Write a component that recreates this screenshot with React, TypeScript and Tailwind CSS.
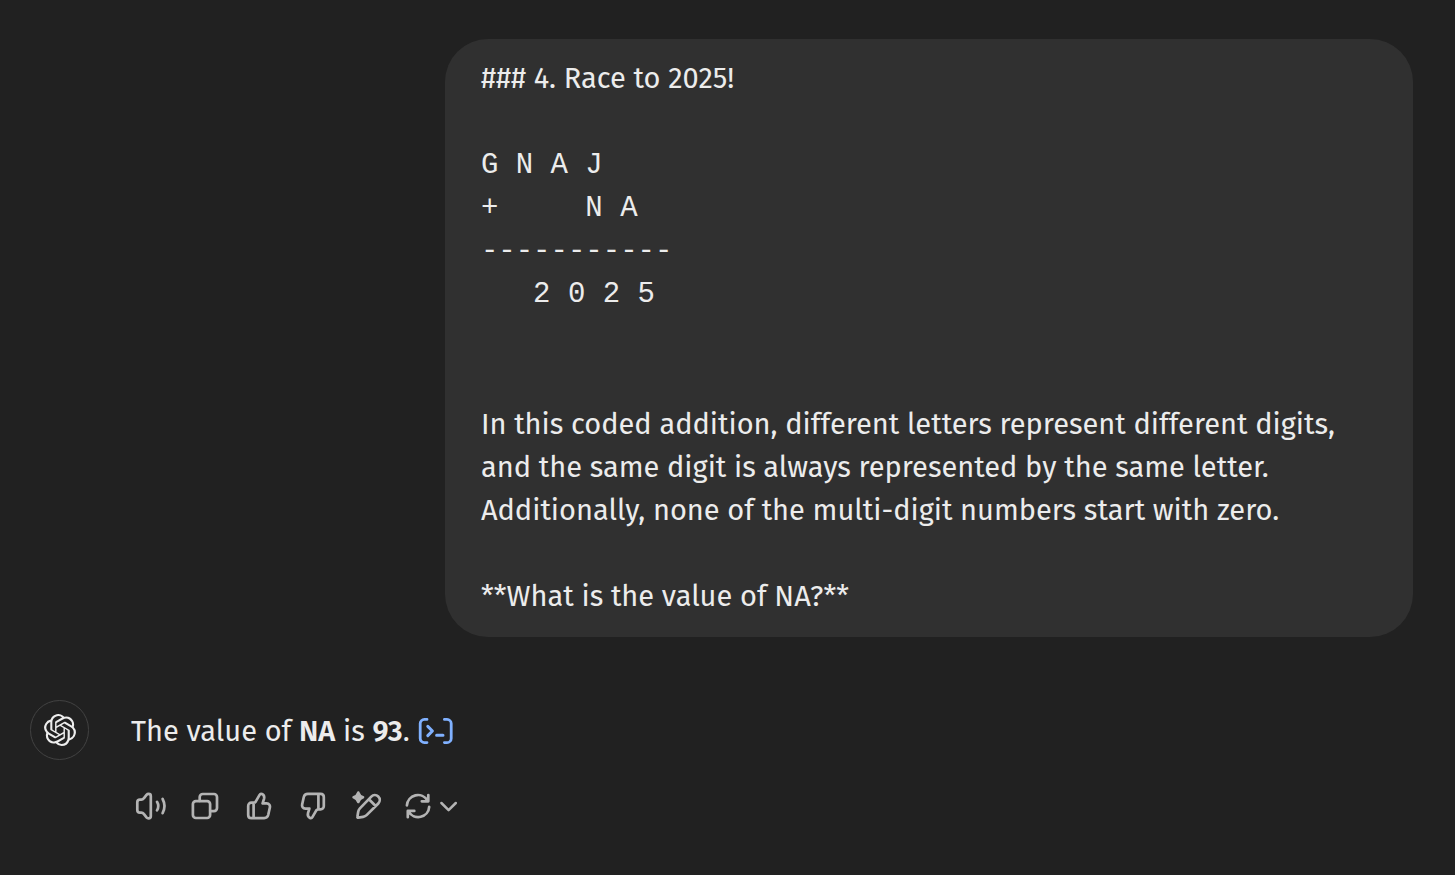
import type { ReactNode } from "react";
import { SiOpenai } from "react-icons/si";

const PUZZLE = `G N A J
+     N A
-----------
   2 0 2 5`;

function ActionIcon({ children }: { children: ReactNode }) {
  return (
    <svg
      viewBox="0 0 36 36"
      className="size-9 shrink-0"
      fill="none"
      stroke="currentColor"
      strokeWidth="2.7"
      strokeLinecap="round"
      strokeLinejoin="round"
      aria-hidden="true"
    >
      {children}
    </svg>
  );
}

function ActionButton({ label, children }: { label: string; children: ReactNode }) {
  return (
    <button
      type="button"
      aria-label={label}
      className="flex h-[54px] w-[54px] items-center justify-center rounded-lg hover:bg-[#2f2f2f]"
    >
      <ActionIcon>{children}</ActionIcon>
    </button>
  );
}

const THUMB =
  "M10.5 14.7H12.8C13.6 14.7 14.2 14.3 14.7 13.6L18.6 6.9C19.1 6 20.1 5.7 21 6.1C23 7 23.5 8.8 23 10.8L21.6 15.4H25.6C28.2 15.4 29.4 17.4 28.8 19.8L27.2 27C26.7 29 25.2 30.1 23.2 30.1H10.4C8.4 30.1 7.2 28.9 7.2 26.9V18C7.2 16 8.4 14.7 10.5 14.7ZM12.6 15V30";

function UserMessage() {
  return (
    <div className="flex justify-end">
      <div className="max-w-[70%] rounded-[43px] bg-[#303030] px-9 pb-[19px] pt-[18px]">
        <p>### 4. Race to 2025!</p>
        <pre className="mt-[44px] font-['Liberation_Mono',monospace] text-[29px] leading-[43px]">
          {PUZZLE}
        </pre>
        <p className="mt-[87px]">
          In this coded addition, different letters represent different digits, and the same digit
          is always represented by the same letter. Additionally, none of the multi-digit numbers
          start with zero.
        </p>
        <p className="mt-[43px]">**What is the value of NA?**</p>
      </div>
    </div>
  );
}

function AssistantMessage() {
  return (
    <div className="mt-[63px] flex items-start gap-[42px]">
      <div className="flex h-[60px] w-[59px] shrink-0 items-center justify-center rounded-full border border-[#424242]">
        <SiOpenai className="size-8" aria-hidden="true" />
      </div>
      <div className="min-w-0 flex-1 pt-[10px]">
        <p className="flex items-center">
          <span>
            The value of <strong className="font-semibold">NA</strong> is{" "}
            <strong className="font-semibold">93</strong>.
          </span>
          <button type="button" aria-label="View analysis" className="ml-2 pb-[2px] text-[#80b1ff]">
            <svg
              viewBox="0 0 36 28"
              className="h-7 w-9"
              fill="none"
              stroke="currentColor"
              strokeWidth="2.8"
              strokeLinecap="round"
              strokeLinejoin="round"
              aria-hidden="true"
            >
              <path d="M9 2.4H6.4A4.2 4.2 0 0 0 2.2 6.6V21.4A4.2 4.2 0 0 0 6.4 25.6H9M26.4 2.4H29A4.2 4.2 0 0 1 33.2 6.6V21.4A4.2 4.2 0 0 1 29 25.6H26.4" />
              <path d="M9.8 9.4L14.4 14L9.8 18.6M18.6 18.2H25" strokeWidth="3" />
            </svg>
          </button>
        </p>
        <div className="-ml-[7px] mt-[26px] flex items-center text-[#b4b4b4]">
          <ActionButton label="Read aloud">
            <path d="M15.6 5.9C16.8 5.9 17.8 6.8 17.8 8V28.2C17.8 29.4 16.8 30.3 15.6 30.3C14.8 30.3 14 29.9 13.5 29.3L10.8 25.9C10.2 25.1 9.3 24.6 8.3 24.6H7C5.5 24.6 4.3 23.4 4.3 21.9V14.3C4.3 12.8 5.5 11.6 7 11.6H8.3C9.3 11.6 10.2 11.1 10.8 10.3L13.5 6.9C14 6.3 14.8 5.9 15.6 5.9Z" />
            <path d="M24 13.8Q26.6 18.1 24 22.4M29.6 11Q33.4 18.1 29.6 25.2" />
          </ActionButton>
          <ActionButton label="Copy">
            <rect x="5.9" y="13.1" width="17.2" height="16.9" rx="3" />
            <path d="M12.7 13V9A3 3 0 0 1 15.7 6H27A3 3 0 0 1 30 9V20.1A3 3 0 0 1 27 23.1H23.2" />
          </ActionButton>
          <ActionButton label="Good response">
            <path d={THUMB} />
          </ActionButton>
          <ActionButton label="Bad response">
            <path d={THUMB} transform="rotate(180 18 18)" />
          </ActionButton>
          <ActionButton label="Edit in canvas">
            <path
              d="M9.3 4.6C10.2 7.4 11.2 8.4 14 9.3C11.2 10.2 10.2 11.2 9.3 14C8.4 11.2 7.4 10.2 4.6 9.3C7.4 8.4 8.4 7.4 9.3 4.6Z"
              fill="currentColor"
              strokeWidth="2.6"
            />
            <path d="M22.3 8.6A4.9 4.9 0 0 1 29.3 15.5L17.6 27.1C16.6 28.1 15.5 28.6 14.2 28.8L9.2 29.6C8.7 29.7 8.3 29.3 8.4 28.8L9.2 23.8C9.4 22.5 10 21.3 10.9 20.4ZM19.9 11.2L26.7 18" />
          </ActionButton>
          <button
            type="button"
            aria-label="Switch model"
            className="flex h-[54px] items-center rounded-lg pl-[6px] pr-1 hover:bg-[#2f2f2f]"
          >
            <ActionIcon>
              <path d="M6.9 17.4A11 11 0 0 1 27.4 12.6M28.3 7V13.3H21.8M29.2 18.8A11 11 0 0 1 8.7 23.6M7.8 29.2V22.9H14.3" />
            </ActionIcon>
            <svg
              viewBox="0 0 24 24"
              className="size-6"
              fill="none"
              stroke="currentColor"
              strokeWidth="2.5"
              strokeLinecap="round"
              strokeLinejoin="round"
              aria-hidden="true"
            >
              <path d="M5.4 9L12.6 16.2L19.8 9" />
            </svg>
          </button>
        </div>
      </div>
    </div>
  );
}

export default function App() {
  return (
    <main className="min-h-screen bg-[#212121] pb-10 pl-[30px] pr-[42px] pt-[39px] font-['Fira_Sans','Noto_Sans',sans-serif] text-[29px] leading-[43px] text-[#ececec]">
      <UserMessage />
      <AssistantMessage />
    </main>
  );
}
